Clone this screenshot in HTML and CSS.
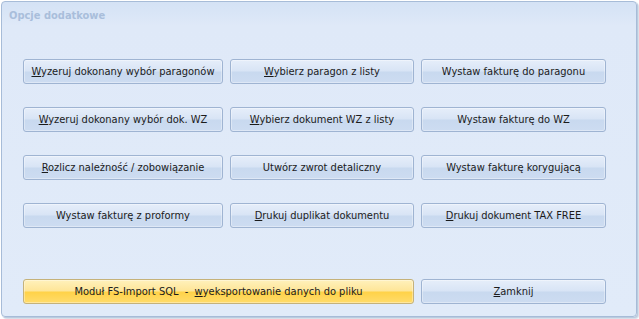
FILE: index.html
```html
<!DOCTYPE html>
<html lang="pl">
<head>
    <meta charset="UTF-8">
    <title>Opcje dodatkowe</title>
    <link rel="stylesheet" href="styles.css">
</head>
<body>
    <div class="panel">
        <div class="panel-title">Opcje dodatkowe</div>

        <div class="button-grid">
            <button type="button" class="btn"><u>W</u>yzeruj dokonany wybór paragonów</button>
            <button type="button" class="btn"><u>W</u>ybierz paragon z listy</button>
            <button type="button" class="btn">Wystaw fakturę do paragonu</button>

            <button type="button" class="btn"><u>W</u>yzeruj dokonany wybór dok. WZ</button>
            <button type="button" class="btn"><u>W</u>ybierz dokument WZ z listy</button>
            <button type="button" class="btn">Wystaw fakturę do WZ</button>

            <button type="button" class="btn"><u>R</u>ozlicz należność / zobowiązanie</button>
            <button type="button" class="btn">Utwórz zwrot detaliczny</button>
            <button type="button" class="btn">Wystaw fakturę korygującą</button>

            <button type="button" class="btn">Wystaw fakturę z proformy</button>
            <button type="button" class="btn"><u>D</u>rukuj duplikat dokumentu</button>
            <button type="button" class="btn"><u>D</u>rukuj dokument TAX FREE</button>
        </div>

        <div class="bottom-row">
            <button type="button" class="btn btn-yellow">Moduł FS-Import SQL&nbsp;&nbsp;-&nbsp;&nbsp;<u>w</u>yeksportowanie danych do pliku</button>
            <button type="button" class="btn"><u>Z</u>amknij</button>
        </div>
    </div>
</body>
</html>
```

FILE: styles.css
```css
body {
    margin: 0;
    padding: 0;
    background: #ffffff;
    font-family: 'DejaVu Sans Condensed', 'DejaVu Sans', sans-serif;
    width: 639px;
    height: 319px;
    overflow: hidden;
}

.panel {
    box-sizing: border-box;
    margin: 1px 0 0 1px;
    width: 636px;
    height: 316px;
    border: 1px solid #a7bcd8;
    border-radius: 4px;
    background: linear-gradient(to bottom, #d4e2f5 0px, #dfe9f8 24px, #e1ebf9 100%);
    box-shadow: 1px 1px 1px #b9c9de, 2px 2px 1px #d8e0ea;
    padding: 0 0 0 21px;
}

.panel-title {
    font-size: 11px;
    font-weight: bold;
    color: #a9bedb;
    padding-top: 7px;
    margin-left: -14px;
    height: 57px;
    box-sizing: border-box;
}

.button-grid {
    display: grid;
    grid-template-columns: 200px 184px 185px;
    grid-auto-rows: 25px;
    column-gap: 7px;
    row-gap: 23px;
}

.bottom-row {
    display: grid;
    grid-template-columns: 391px 185px;
    grid-auto-rows: 25px;
    column-gap: 7px;
    margin-top: 51px;
}

.btn {
    font-family: 'DejaVu Sans Condensed', 'DejaVu Sans', sans-serif;
    font-size: 11px;
    color: #1b1b1b;
    border: 1px solid #9fb4d2;
    border-radius: 3px;
    padding: 0;
    background: linear-gradient(to bottom, #e6eefa 0%, #d8e4f5 48%, #c8d9ef 52%, #cddcf1 100%);
    box-shadow: inset 0 0 0 1px rgba(255, 255, 255, 0.35);
    cursor: pointer;
    white-space: nowrap;
}

.btn-yellow {
    border-color: #c5b27a;
    background: linear-gradient(to bottom, #fff1bc 0%, #fee597 48%, #ffd248 52%, #ffdc6c 100%);
}

u {
    text-decoration: underline;
    text-underline-offset: 1px;
}
```
